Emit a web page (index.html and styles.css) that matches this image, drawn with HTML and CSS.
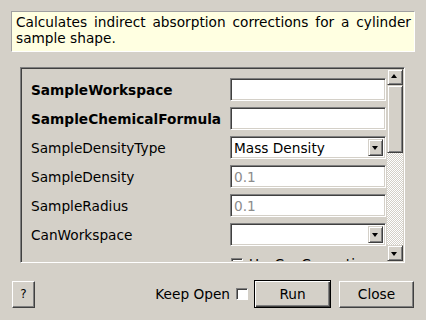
FILE: index.html
```html
<!DOCTYPE html>
<html lang="en">
<head>
  <meta charset="UTF-8">
  <title>Algorithm Dialog</title>
  <link rel="stylesheet" href="styles.css">
</head>
<body>
  <div class="dialog">
    <div class="desc">Calculates indirect absorption corrections for a cylinder sample shape.</div>

    <div class="frame">
      <div class="props">
        <div class="row"><span class="lbl bold">SampleWorkspace</span><span class="field"></span></div>
        <div class="row"><span class="lbl bold">SampleChemicalFormula</span><span class="field"></span></div>
        <div class="row"><span class="lbl">SampleDensityType</span><span class="field combo"><span class="val">Mass Density</span><span class="drop"></span></span></div>
        <div class="row"><span class="lbl">SampleDensity</span><span class="field"><span class="val dim">0.1</span></span></div>
        <div class="row"><span class="lbl">SampleRadius</span><span class="field"><span class="val dim">0.1</span></span></div>
        <div class="row"><span class="lbl">CanWorkspace</span><span class="field combo"><span class="val"></span><span class="drop"></span></span></div>
        <div class="row"><span class="lbl"></span><span class="check-row"><span class="box"></span>UseCanCorrections</span></div>
      </div>
      <div class="vbar">
        <span class="sbtn up"></span>
        <span class="thumb"></span>
        <span class="trough"></span>
        <span class="sbtn down"></span>
      </div>
    </div>

    <div class="actions">
      <button class="btn help">?</button>
      <span class="spacer"></span>
      <label class="keep">Keep Open <span class="box"></span></label>
      <button class="btn run">Run</button>
      <button class="btn close">Close</button>
    </div>
  </div>
</body>
</html>
```

FILE: styles.css
```css
:root { --face:#d4d0c8; --shadow:#808080; --dark:#404040; --text:#000; }
* { box-sizing:border-box; }
body { margin:0; background:var(--face); font-family:"DejaVu Sans", sans-serif; font-size:13.7px; color:var(--text); }
.dialog { width:426px; height:320px; display:flex; flex-direction:column; }

.desc { margin:11px 11px 0 11px; height:41px; padding:2px 3px 0 4px; background:#ffffe1;
  border:1px solid; border-color:#a0a0a0 #fff #fff #a0a0a0; text-align:justify; line-height:16px; }

.frame { margin:15px 0 0 20px; width:385px; height:196px; display:flex;
  border:1px solid; border-color:var(--shadow) #fff #fff var(--shadow);
  box-shadow:inset 1px 1px var(--dark), inset -1px -1px var(--face); padding:1px; overflow:hidden; }
.props { flex:1; padding:9px 0 0 9px; display:flex; flex-direction:column; gap:6px; overflow:hidden; }
.row { display:flex; align-items:center; height:23px; flex:none; }
.lbl { flex:1; white-space:nowrap; }
.bold { font-weight:bold; }
.field { width:156px; height:23px; margin-right:1px; background:#fff; display:flex; align-items:center;
  border:1px solid; border-color:var(--shadow) #fff #fff var(--shadow);
  box-shadow:inset 1px 1px var(--dark), inset -1px -1px var(--face); padding:0 2px 0 3px; }
.val { flex:1; white-space:nowrap; }
.dim { color:#8c8c8c; }
.combo { padding-right:2px; }
.drop { width:15px; height:17px; background:var(--face); position:relative;
  border:1px solid; border-color:var(--face) var(--dark) var(--dark) var(--face);
  box-shadow:inset 1px 1px #fff, inset -1px -1px var(--shadow); }
.drop::after { content:""; position:absolute; left:3px; top:6px;
  border:3.5px solid transparent; border-top:4px solid #000; border-bottom:0; }
.check-row { width:157px; display:flex; align-items:center; gap:6px; white-space:nowrap; padding-left:1px; }
.box { width:12px; height:12px; flex:none; background:#fff; display:inline-block;
  border:1px solid; border-color:var(--shadow) #fff #fff var(--shadow); box-shadow:inset 1px 1px var(--dark); }

.vbar { width:16px; display:flex; flex-direction:column; }
.sbtn { height:16px; flex:none; background:var(--face); position:relative;
  border:1px solid; border-color:var(--face) var(--dark) var(--dark) var(--face);
  box-shadow:inset 1px 1px #fff, inset -1px -1px var(--shadow); }
.sbtn::after { content:""; position:absolute; left:3px; border:3.5px solid transparent; }
.up::after { top:4px; border-bottom:4px solid #000; border-top:0; }
.down::after { top:6px; border-top:4px solid #000; border-bottom:0; }
.thumb { height:68px; flex:none; background:var(--face);
  border:1px solid; border-color:var(--face) var(--dark) var(--dark) var(--face);
  box-shadow:inset 1px 1px #fff, inset -1px -1px var(--shadow); }
.trough { flex:1; background:repeating-conic-gradient(var(--face) 0 25%, #fff 0 50%) 0 0/2px 2px; }

.actions { margin-top:17px; padding:0 12px; display:flex; align-items:center; height:28px; }
.spacer { flex:1; }
.keep { display:flex; align-items:center; gap:6px; margin-right:6px; }
.btn { font:inherit; color:var(--text); background:var(--face); height:27px; padding:0;
  border:1px solid; border-color:#fff var(--dark) var(--dark) #fff; box-shadow:inset -1px -1px var(--shadow); }
.help { width:23px; font-size:12px; }
.run { width:77px; height:28px; border:1px solid #000;
  box-shadow:inset 1px 1px #fff, inset -1px -1px var(--dark), inset -2px -2px var(--shadow); }
.close { width:75px; margin-left:8px; }
```
